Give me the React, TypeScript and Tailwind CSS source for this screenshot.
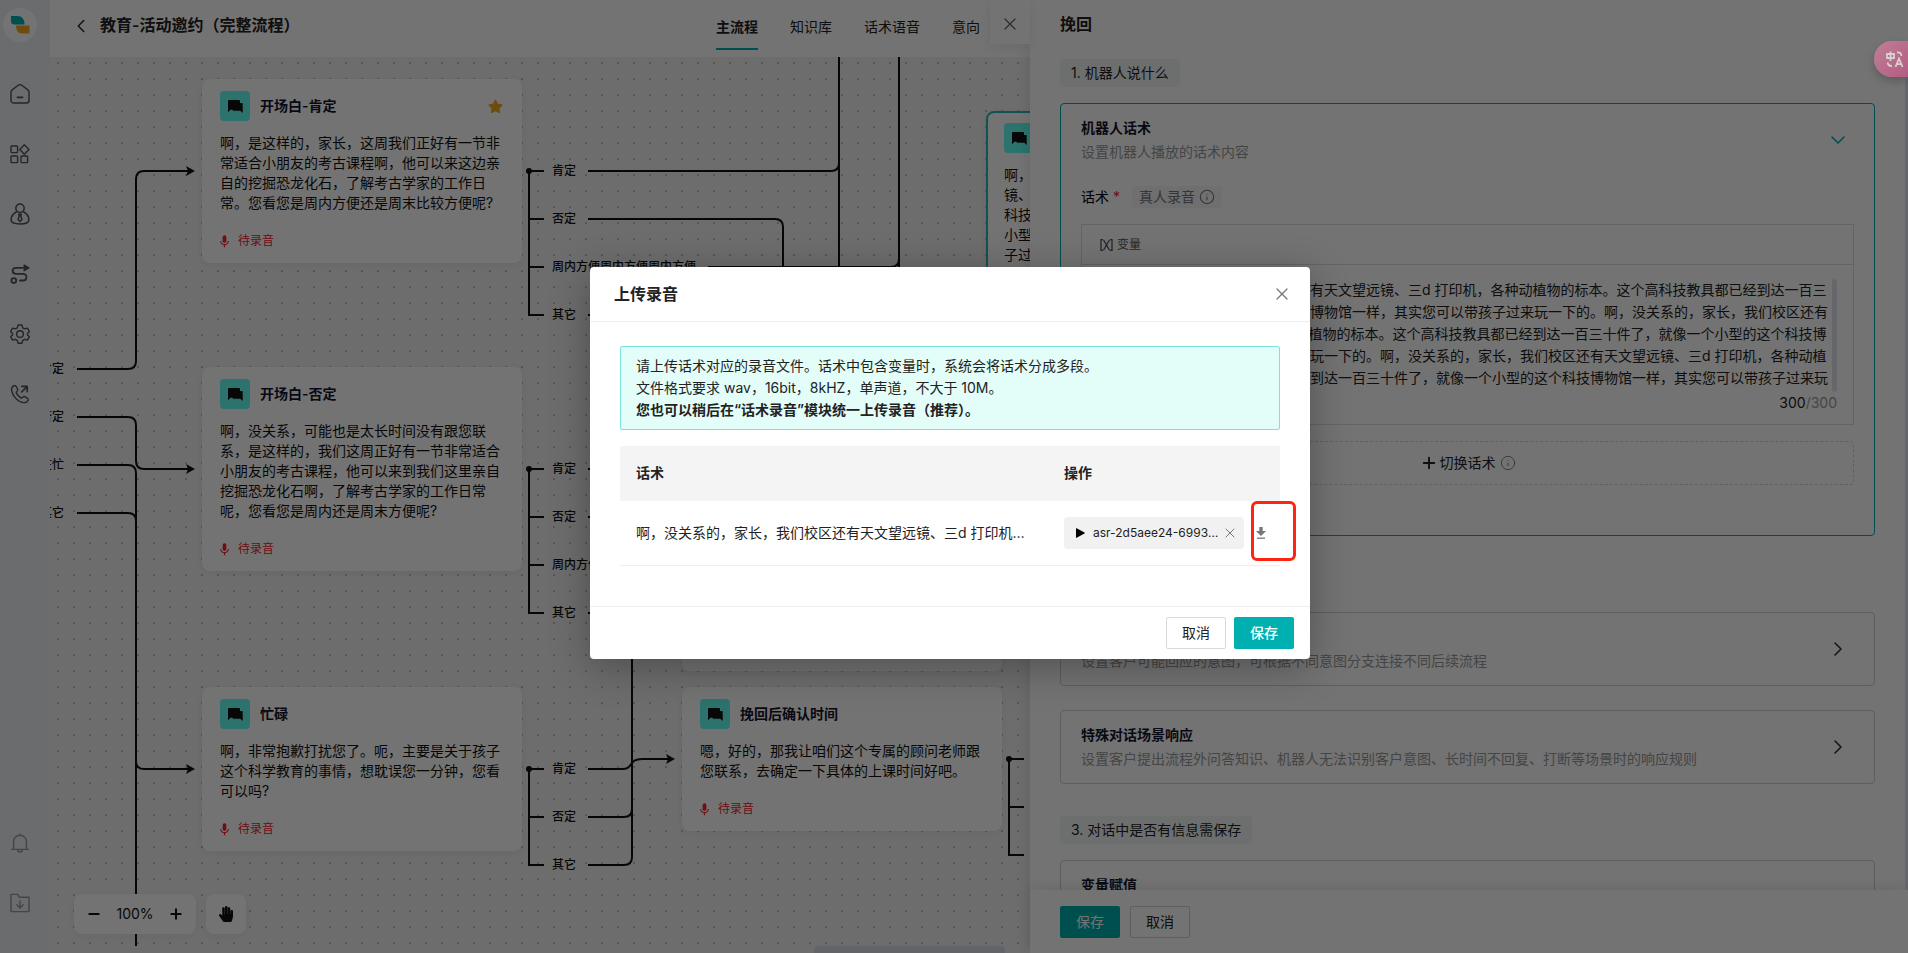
import { useState } from 'react';
import type { ReactNode } from 'react';
import { ChevronDown, ChevronLeft, ChevronRight, Info, Minus, Plus, X } from 'lucide-react';
import { FaHandPaper, FaStar } from 'react-icons/fa';
import { MdMic } from 'react-icons/md';

const SCRIPT_ONCE =
  '啊，没关系的，家长，我们校区还有天文望远镜、三d 打印机，各种动植物的标本。这个高科技教具都已经到达一百三十件了，就像一个小型的这个科技博物馆一样，其实您可以带孩子过来玩一下的。';

type FlowNode = {
  id: string;
  title: string;
  text: string;
  x: number;
  y: number;
  starred?: boolean;
  active?: boolean;
};

// canvas coordinates, origin at the top left corner of the canvas
const NODES: FlowNode[] = [
  { id: 'yes', title: '开场白-肯定', x: 152, y: 22, starred: true, text: '啊，是这样的，家长，这周我们正好有一节非常适合小朋友的考古课程啊，他可以来这边亲自的挖掘恐龙化石，了解考古学家的工作日常。您看您是周内方便还是周末比较方便呢?' },
  { id: 'no', title: '开场白-否定', x: 152, y: 310, text: '啊，没关系，可能也是太长时间没有跟您联系，是这样的，我们这周正好有一节非常适合小朋友的考古课程，他可以来到我们这里亲自挖掘恐龙化石啊，了解考古学家的工作日常呢，您看您是周内还是周末方便呢?' },
  { id: 'busy', title: '忙碌', x: 152, y: 630, text: '啊，非常抱歉打扰您了。呃，主要是关于孩子这个科学教育的事情，想耽误您一分钟，您看可以吗?' },
  { id: 'confirm', title: '挽回后确认时间', x: 632, y: 630, text: '嗯，好的，那我让咱们这个专属的顾问老师跟您联系，去确定一下具体的上课时间好吧。' },
  { id: 'retain', title: '挽回', x: 936, y: 54, active: true, text: SCRIPT_ONCE },
];

const BRANCHES = [
  { x: 502, ys: [114, 162, 210, 258], labels: ['肯定', '否定', '周内方便周内方便周内方便', '其它'] },
  { x: 502, ys: [412, 460, 508, 556], labels: ['肯定', '否定', '周内方便', '其它'] },
  { x: 502, ys: [712, 760, 808], labels: ['肯定', '否定', '其它'] },
  { x: -10, ys: [312, 360, 408, 456], labels: ['肯定', '否定', '在忙', '其它'] },
];

const EDGES = [
  // left column
  'M27 312H78Q86 312 86 304V122Q86 114 94 114H138',
  'M27 360H78Q86 360 86 368V404Q86 412 94 412H138',
  'M27 408H78Q86 408 86 416V704Q86 712 94 712H138',
  'M27 456H78Q86 456 86 464V889',
  // first node
  'M494 114H479M479 114V258H494M479 162H494M479 210H494',
  'M538 114H781Q789 114 789 106V0M789 100V320',
  'M538 162H725Q733 162 733 170V320',
  'M658 210H841Q849 210 849 202V0M849 190V320',
  'M538 258H600',
  // second node
  'M494 412H479V556H494M479 460H494M479 508H494',
  'M538 412H600M538 460H600M538 556H600',
  // third node
  'M494 712H479V808H494M479 760H494',
  'M538 712H572C584 712 578 702 592 702H618',
  'M538 760H574Q582 760 582 752V560',
  'M538 808H574Q582 808 582 800V740',
  // confirm node
  'M974 702H959V798H974M959 750H974',
];

const ARROWS = [
  [145, 114],
  [145, 412],
  [145, 712],
  [625, 702],
];

const DOTS = [
  [479, 114],
  [479, 412],
  [479, 712],
  [959, 702],
];

function IconFrame({ children, size = 20 }: { children: ReactNode; size?: number }) {
  return (
    <svg width={size} height={size} viewBox="0 0 20 20" fill="none" stroke="currentColor" strokeWidth="1.4" strokeLinecap="round" strokeLinejoin="round" aria-hidden="true">
      {children}
    </svg>
  );
}

const NAV_ICONS = [
  {
    label: '首页',
    icon: <IconFrame><path d="M1 8.200Q1 6.800 2.200 5.900L8.200 1.300Q10 0 11.800 1.300L17.800 5.900Q19 6.800 19 8.200V16.500Q19 19 16.500 19H3.500Q1 19 1 16.500Z" /><path d="M7.500 13.300H12.500" strokeWidth="1.8" /></IconFrame>,
  },
  {
    label: '应用',
    icon: <IconFrame><rect x="1" y="2" width="6.6" height="6.6" rx=".8" /><rect x="1" y="12" width="6.6" height="6.6" rx=".8" /><rect x="11" y="12" width="6.6" height="6.6" rx=".8" /><path d="M14.3 .8L19 5.5L14.3 10.2L9.8 5.5Z" /></IconFrame>,
  },
  {
    label: '客户',
    icon: <IconFrame size={22}><circle cx="10" cy="4.8" r="3.800" /><path d="M6.900 8C4.100 9.500 1.900 12.500 1.900 15.500Q1.900 19 10 19T18.100 15.500C18.100 12.500 15.900 9.500 13.100 8" /><path d="M8.800 10.200H11.200L10.700 11.600L11.700 15L10 16.800L8.300 15L9.300 11.600Z" /></IconFrame>,
  },
  {
    label: '流程',
    icon: <IconFrame><g strokeWidth="1.8"><circle cx="3.8" cy="16.6" r="2.4" /><path d="M13 3.800H6Q2.600 3.800 2.600 6.800T6 9.900H12.800Q16.400 9.900 16.400 13.200T12.800 16.500H10" /></g><path d="M14.200 1L18.800 3.800L14.200 6.600Z" fill="currentColor" /></IconFrame>,
  },
  {
    label: '设置',
    icon: <IconFrame><path d="M8 1H12L12.7 3.8L14.6 4.9L17.4 4.1L19.4 7.5L17.4 9.5V10.8L19.4 12.7L17.4 16.1L14.6 15.3L12.7 16.4L12 19.2H8L7.3 16.4L5.4 15.3L2.6 16.1L.6 12.7L2.6 10.8V9.5L.6 7.5L2.6 4.1L5.4 4.9L7.3 3.8Z" /><circle cx="10" cy="10.1" r="3.4" /></IconFrame>,
  },
  {
    label: '外呼',
    icon: <IconFrame><path d="M4 1.600Q1.200 2.800 1.600 6.400C2.400 12 7.800 18 13.400 18.600Q17 19 18.200 16Q18.400 15.200 17.800 14.600L14.800 12.600Q14 12.200 13.200 12.800L12 13.900Q11.400 14.200 10.800 13.800Q7.800 11.800 6.400 9.200Q6 8.400 6.600 7.800L7.600 6.600Q8 6 7.600 5.200L5.800 2Q5 1.200 4 1.600Z" /><path d="M11.600 8L17 2.600M11.800 2.400H17.200V7.600" strokeWidth="1.7" /></IconFrame>,
  },
];

const NAV_BOTTOM = [
  {
    label: '通知',
    icon: <IconFrame><path d="M3.6 16.4V8.6A6.4 6.4 0 0 1 16.4 8.6V16.4M1.6 16.4H18.4M7.6 16.6Q7.8 19 10 19T12.4 16.6M10 2.2V1" /></IconFrame>,
  },
  {
    label: '下载',
    icon: <IconFrame><path d="M1 1.4H7.4L9.6 4.2H19V18.6H1ZM10 8V14.8M6.8 11.8L10 15L13.2 11.8" /></IconFrame>,
  },
];

function Sidebar() {
  return (
    <nav className="flex w-[50px] shrink-0 flex-col items-start bg-[#edeff4] px-[3px] pt-2 pb-[30px] text-[#555]">
      <a href="#home" aria-label="主页" className="flex size-[34px] items-center justify-center rounded-full bg-white">
        <svg width="20" height="18" viewBox="0 0 20 18" aria-hidden="true">
          <path d="M1 0H7.500Q14.500 0 14.500 8.500H4.500Q1 8.500 1 5Z" fill="#00b0b0" />
          <path d="M6 9.500H19.500V17.500H12.500Q6 17.500 6 9.500Z" fill="#f5a623" />
        </svg>
      </a>
      <div className="mt-8 flex flex-col gap-5">
        {NAV_ICONS.map(({ label, icon }) => (
          <button key={label} aria-label={label} className="flex h-10 w-[34px] items-center justify-center">{icon}</button>
        ))}
      </div>
      <div className="mt-auto flex flex-col gap-5 text-[#999]">
        {NAV_BOTTOM.map(({ label, icon }) => (
          <button key={label} aria-label={label} className="flex h-10 w-[34px] items-center justify-center">{icon}</button>
        ))}
      </div>
    </nav>
  );
}

function ChatIcon() {
  return (
    <svg width="15" height="13" viewBox="0 0 15 13" aria-hidden="true">
      <path d="M1 0H11Q12 0 12 1V3H14Q14.700 3 14.700 4V13L12.200 10.800H5.500Q4.500 10.800 4.500 9.800H2.600L0 12.300V1Q0 0 1 0Z" fill="#111" />
    </svg>
  );
}

function NodeCard({ node }: { node: FlowNode }) {
  return (
    <article
      className={`absolute w-80 rounded-lg bg-white px-[18px] py-3 shadow-[0_2px_10px_rgba(0,0,0,0.06)] ${node.active ? 'outline-2 -outline-offset-2 outline-[#2bb5b5]' : ''}`}
      style={{ left: node.x, top: node.y }}
    >
      <header className="flex h-[30px] items-center">
        <span className="mr-2.5 flex size-[30px] items-center justify-center rounded bg-[#5ffff0]"><ChatIcon /></span>
        <h3 className="text-sm font-semibold text-[#14142b]">{node.title}</h3>
        {node.starred && <FaStar size={15} className="mr-px ml-auto text-[#f5a623]" />}
      </header>
      <p className="mt-3 text-sm leading-5 text-[#111]">{node.text}</p>
      <p className="mt-[18px] flex items-center gap-1.5 text-xs leading-5 text-[#f5222d]">
        <MdMic size={15} className="-ml-[3px]" />待录音
      </p>
    </article>
  );
}

function Canvas() {
  return (
    <section className="relative min-h-0 flex-1 overflow-hidden bg-[#f2f2f2] bg-[radial-gradient(circle,#bebebe_1px,transparent_1px)] bg-[size:16px_16px] bg-[position:0px_-2px]">
      {/* tail of the card that sits above the confirm node */}
      <div className="absolute top-[500px] left-[632px] h-[114px] w-80 rounded-lg bg-white shadow-[0_2px_10px_rgba(0,0,0,0.06)]" />
      <svg className="absolute inset-0 size-full" fill="none" stroke="#111" strokeWidth="2" aria-hidden="true">
        {EDGES.map((d) => <path key={d} d={d} />)}
        {ARROWS.map(([x, y]) => <path key={`${x}-${y}`} d={`M${x} ${y}L${x - 9} ${y - 5}L${x - 7} ${y}L${x - 9} ${y + 5}Z`} fill="#111" stroke="none" />)}
        {DOTS.map(([x, y]) => <circle key={`${x}-${y}`} cx={x} cy={y} r="3" fill="#111" stroke="none" />)}
      </svg>
      {BRANCHES.map((branch) =>
        branch.labels.map((label, i) => (
          <span key={branch.ys[i]} className="absolute -mt-2 bg-[#f2f2f2] text-xs leading-4 font-medium whitespace-nowrap text-[#111]" style={{ left: branch.x, top: branch.ys[i] }}>
            {label}
          </span>
        )),
      )}
      {NODES.map((node) => <NodeCard key={node.id} node={node} />)}
      <div className="absolute bottom-[19px] left-6 flex gap-2.5 text-[#111]">
        <div className="flex h-10 w-[122px] items-center justify-between rounded-lg bg-white px-3 shadow-[0_2px_8px_rgba(0,0,0,0.06)]">
          <button aria-label="缩小"><Minus size={16} strokeWidth={3} /></button>
          <span className="text-sm">100%</span>
          <button aria-label="放大"><Plus size={16} strokeWidth={3} /></button>
        </div>
        <button aria-label="拖动" className="flex size-10 items-center justify-center rounded-lg bg-white shadow-[0_2px_8px_rgba(0,0,0,0.06)]">
          <FaHandPaper size={16} />
        </button>
      </div>
      <div className="absolute bottom-0 left-[764px] h-[7px] w-[191px] rounded-t-sm bg-[#d9deea]" />
    </section>
  );
}

const TABS = ['主流程', '知识库', '话术语音', '意向'];

function FlowHeader() {
  return (
    <header className="flex h-[57px] shrink-0 items-start bg-white pl-5">
      <button aria-label="返回" className="mt-[15px] text-[#222]"><ChevronLeft size={22} strokeWidth={1.6} /></button>
      <h1 className="mt-[13px] ml-2 text-base leading-6 font-semibold text-[#222]">教育-活动邀约（完整流程）</h1>
      <div className="mr-[50px] ml-auto flex gap-8">
        {TABS.map((tab, i) => (
          <a key={tab} href={`#tab-${i}`} className={`h-[50px] pt-4 text-sm leading-[22px] text-[#222] ${i === 0 ? 'border-b-2 border-[#00b0b0] font-semibold' : ''}`}>{tab}</a>
        ))}
      </div>
    </header>
  );
}

function SectionTag({ children }: { children: ReactNode }) {
  return <h3 className="mb-4 inline-block rounded bg-[#f2f6f5] px-[11px] text-sm leading-7 text-[#222]">{children}</h3>;
}

function PanelHeader({ title, desc, open }: { title: string; desc: string; open?: boolean }) {
  return (
    <div className="flex items-center justify-between py-3">
      <div className="text-sm leading-6">
        <h4 className="font-semibold text-[#14142b]">{title}</h4>
        <p className="text-[#999]">{desc}</p>
      </div>
      <button aria-label={open ? '收起' : '展开'} className={open ? 'mr-1 text-[#00b0b0]' : 'mr-1 text-[#333]'}>
        {open ? <ChevronDown size={24} strokeWidth={1.6} /> : <ChevronRight size={24} strokeWidth={1.6} />}
      </button>
    </div>
  );
}

function Panel({ title, desc }: { title: string; desc: string }) {
  return (
    <div className="rounded border border-[#d0d0d0] px-5">
      <PanelHeader title={title} desc={desc} />
    </div>
  );
}

function ScriptEditor() {
  const [script, setScript] = useState(SCRIPT_ONCE.repeat(4));
  return (
    <div className="px-5 pt-2.5 pb-[50px]">
      <div className="flex h-[22px] items-center text-sm">
        <label htmlFor="script">话术</label>
        <span className="ml-1 text-[#f5222d]">*</span>
        <span className="ml-3 flex h-[22px] items-center gap-1 rounded bg-[#f5f5f5] px-[7px] text-[#777]">真人录音<Info size={16} strokeWidth={1.6} /></span>
      </div>
      <div className="mt-4 border border-[#dedede]">
        <div className="flex h-10 items-center border-b border-[#dedede] px-[18px]">
          <button className="flex items-center gap-1 text-xs text-[#555]">
            <svg width="13" height="12" viewBox="0 0 13 12" fill="none" stroke="currentColor" strokeWidth="1.3" aria-hidden="true">
              <path d="M3.200 .7H1V11.300H3.200M9.800 .7H12V11.300H9.800M3.600 1L9.400 11M9.400 1L3.600 11" />
            </svg>
            变量
          </button>
        </div>
        <div className="flex gap-1 pt-3.5 pr-4 pl-[18px]">
          <textarea id="script" value={script} onChange={(e) => setScript(e.target.value)} className="h-[113px] min-w-0 flex-1 resize-none overflow-hidden text-sm leading-[22px] text-[#222] outline-none" />
          <span className="w-[5px] rounded-full bg-[#e2e5ef]" />
        </div>
        <p className="pr-4 pb-2.5 text-right text-sm leading-[22px] text-[#999]"><span className="text-[#222]">300</span>/300</p>
      </div>
      <button className="mt-4 flex h-11 w-full items-center justify-center rounded border border-dashed border-[#d4d4d4] text-sm text-[#222]">
        <Plus size={18} strokeWidth={2.5} className="mr-0.5" />切换话术<Info size={16} strokeWidth={1.4} className="ml-1 text-[#777]" />
      </button>
    </div>
  );
}

function Drawer() {
  return (
    <aside className="relative z-10 flex w-[878px] shrink-0 flex-col bg-white shadow-[0_0_16px_rgba(0,0,0,0.12)]">
      <button aria-label="关闭面板" className="absolute top-0 -left-10 flex h-11 w-10 items-center justify-center bg-white pt-1 text-[#666] shadow-[0_4px_12px_rgba(0,0,0,0.08)]">
        <X size={20} strokeWidth={1.5} />
      </button>
      <h2 className="mt-3 px-[30px] text-base leading-6 font-semibold text-[#222]">挽回</h2>
      <div className="mt-[23px] min-h-0 flex-1 space-y-8 overflow-hidden border-r-3 border-[#e2e5ef] px-[30px]">
        <section>
          <SectionTag>1. 机器人说什么</SectionTag>
          <div className="rounded border border-[#00b0b0]">
            <div className="px-5"><PanelHeader title="机器人话术" desc="设置机器人播放的话术内容" open /></div>
            <ScriptEditor />
          </div>
        </section>
        <section>
          <SectionTag>2. 客户可能说什么</SectionTag>
          <div className="space-y-6">
            <Panel title="客户意图" desc="设置客户可能回应的意图，可根据不同意图分支连接不同后续流程" />
            <Panel title="特殊对话场景响应" desc="设置客户提出流程外问答知识、机器人无法识别客户意图、长时间不回复、打断等场景时的响应规则" />
          </div>
        </section>
        <section>
          <SectionTag>3. 对话中是否有信息需保存</SectionTag>
          <Panel title="变量赋值" desc="设置对话中需要保存的变量" />
        </section>
      </div>
      <footer className="relative flex gap-2.5 bg-white px-[30px] pt-4 pb-[15px] text-sm shadow-[0_-4px_12px_rgba(0,0,0,0.08)]">
        <button className="h-8 w-[60px] rounded-xs bg-[#00b0b0] text-white">保存</button>
        <button className="h-8 w-[60px] rounded-xs border border-[#d0d0d0] text-[#222]">取消</button>
      </footer>
    </aside>
  );
}

function UploadDialog() {
  return (
    <div role="dialog" aria-modal="true" aria-labelledby="upload-title" className="w-[720px] rounded bg-white shadow-[0_8px_40px_rgba(0,0,0,0.3)]">
      <header className="flex h-[55px] items-center justify-between border-b border-[#eee] pr-[18px] pl-6">
        <h2 id="upload-title" className="text-base font-semibold text-[#222]">上传录音</h2>
        <button aria-label="关闭" className="text-[#777]"><X size={20} strokeWidth={1.5} /></button>
      </header>
      <div className="px-[30px] pt-6 pb-10">
        <div className="rounded-xs border border-[#7ae3dc] bg-[#e3fdf9] px-[15px] py-2 text-sm leading-[22px] text-[#222]">
          <p>请上传话术对应的录音文件。话术中包含变量时，系统会将话术分成多段。</p>
          <p>文件格式要求 wav，16bit，8kHZ，单声道，不大于 10M。</p>
          <p className="font-semibold">您也可以稍后在“话术录音”模块统一上传录音（推荐）。</p>
        </div>
        <table className="mt-4 w-full table-fixed text-left text-sm text-[#222]">
          <thead>
            <tr className="h-[55px] bg-[#f4f4f4]">
              <th className="w-[428px] px-4 font-semibold">话术</th>
              <th className="px-4 font-semibold">操作</th>
            </tr>
          </thead>
          <tbody>
            <tr className="h-[65px] border-b border-[#eee]">
              <td className="truncate px-4">{SCRIPT_ONCE}</td>
              <td className="pl-4">
                <div className="flex items-center">
                  <div className="flex h-8 w-[180px] shrink-0 items-center rounded bg-[#f1f1f1] pr-1.5 pl-[11px]">
                    <button aria-label="播放" className="mr-2 text-black">
                      <svg width="10" height="10" viewBox="0 0 10 10" fill="currentColor" aria-hidden="true"><path d="M1 .5Q1 0 1.600 .2L9.500 4.500Q10 5 9.500 5.500L1.600 9.800Q1 10 1 9.500Z" /></svg>
                    </button>
                    <span className="min-w-0 flex-1 truncate text-xs">asr-2d5aee24-6993b7f1.wav</span>
                    <button aria-label="移除" className="text-[#777]"><X size={16} strokeWidth={1.5} /></button>
                  </div>
                  <button aria-label="下载" className="relative ml-3 text-[#777]">
                    <svg width="10" height="12" viewBox="0 0 10 12" aria-hidden="true">
                      <path d="M3.300 0H6.700V4H10L5 9L0 4H3.300Z" fill="currentColor" />
                      <path d="M1 11.200H9" stroke="currentColor" strokeWidth="1.3" />
                    </svg>
                    <span className="absolute -top-[26px] -left-[5px] h-[60px] w-[45px] rounded-md border-3 border-[#ff2412]" />
                  </button>
                </div>
              </td>
            </tr>
          </tbody>
        </table>
      </div>
      <footer className="flex justify-end gap-2 border-t border-[#eee] px-4 py-2.5 text-sm">
        <button className="h-8 w-[60px] rounded-xs border border-[#d9d9d9] bg-white text-[#222]">取消</button>
        <button className="h-8 w-[60px] rounded-xs bg-[#00b0b0] font-medium text-white">保存</button>
      </footer>
    </div>
  );
}

export default function App() {
  return (
    <main className="relative flex h-screen overflow-hidden bg-white font-['Inter','Noto_Sans_CJK_SC',sans-serif]">
      <Sidebar />
      <div className="flex min-w-0 flex-1 flex-col">
        <FlowHeader />
        <Canvas />
      </div>
      <Drawer />
      <div className="absolute inset-0 z-20 flex items-center justify-center bg-black/55 pr-2 pb-[27px]">
        <UploadDialog />
      </div>
      <button aria-label="翻译" className="absolute top-[41px] right-0 z-30 flex h-9 w-[34px] items-center rounded-l-full bg-linear-to-br from-[#c07f94] to-[#b35c84] pl-3 text-[#d5d0d2] shadow-[0_4px_8px_rgba(0,0,0,0.2)]">
        <svg width="18" height="17" viewBox="0 0 18 17" fill="none" stroke="currentColor" strokeWidth="1.8" aria-hidden="true">
          <path d="M1 3H8V7H1ZM4.500 .5V10M11 1.500Q15 1 15.500 5M1.500 11.500Q2 15 6 15M9.500 16L13 7.500L16.500 16M10.800 13.200H15.200" />
        </svg>
      </button>
    </main>
  );
}
